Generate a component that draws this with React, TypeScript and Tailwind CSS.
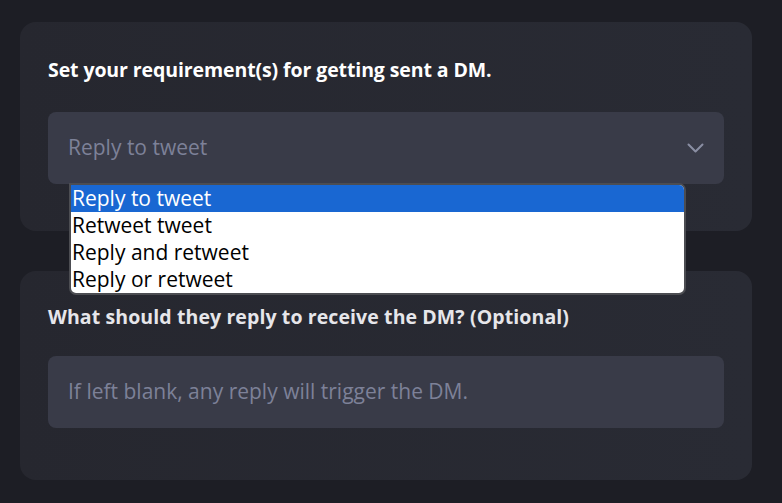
const options = ['Reply to tweet', 'Retweet tweet', 'Reply and retweet', 'Reply or retweet'];

export default function App() {
  return (
    <div className="min-h-[503px] w-full bg-[#1d1e25] pl-5 pr-[30px] pt-[22px] font-['Open_Sans',sans-serif]">
      <section className="relative h-[209px] rounded-[16px] bg-gradient-to-r from-[#26272f] to-[#292b34] px-7 pt-[34px]">
        <h2 className="text-[19.5px] font-bold leading-[28px] tracking-[-0.1px] text-white">Set your requirement(s) for getting sent a DM.</h2>
        <div className="relative mt-[28px]">
          <div className="flex h-[72px] items-center justify-between rounded-[8px] bg-[#393b48] pl-5 pr-[20px] text-[21px] text-[#7d8198]">
            <span>Reply to tweet</span>
            <svg width="17" height="10" viewBox="0 0 17 10" fill="none" className="text-[#8a8ea3]">
              <polyline points="1.5,1.5 8.5,8.5 15.5,1.5" stroke="currentColor" strokeWidth="2" strokeLinecap="round" strokeLinejoin="round" />
            </svg>
          </div>
          <ul className="absolute left-[21px] top-[71px] z-10 w-[617px] overflow-hidden rounded-b-[7px] rounded-tr-[7px] border-2 border-[#4c4d52] bg-white text-[21px] leading-[27px] text-black">
            {options.map((o, i) => (
              <li key={o} className={i === 0 ? 'bg-[#1967d2] pl-[1px] text-white' : 'pl-[1px]'}>
                {o}
              </li>
            ))}
          </ul>
        </div>
      </section>

      <section className="mt-10 h-[209px] rounded-[16px] bg-gradient-to-r from-[#26272f] to-[#292b34] px-7 pt-[32px]">
        <h2 className="text-[19.5px] font-bold leading-[28px] tracking-[0.1px] text-[#e6e6ea]">What should they reply to receive the DM? (Optional)</h2>
        <div className="mt-[25px] flex h-[72px] items-center rounded-[8px] bg-[#393b48] pl-5 text-[21px] text-[#7d8198]">
          If left blank, any reply will trigger the DM.
        </div>
      </section>
    </div>
  );
}
